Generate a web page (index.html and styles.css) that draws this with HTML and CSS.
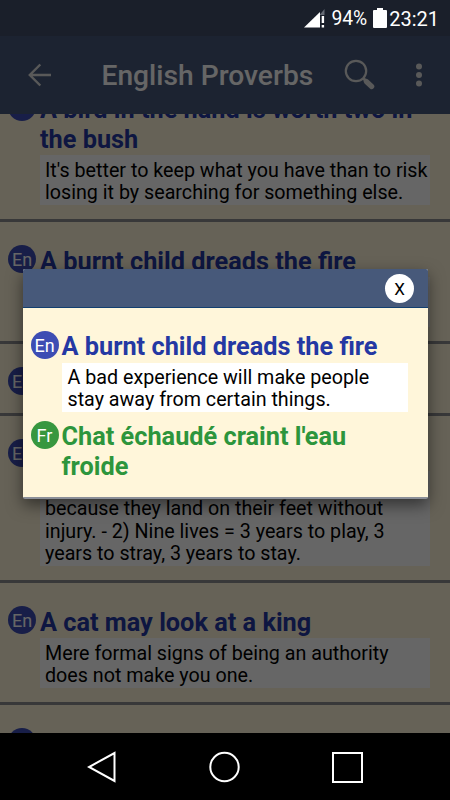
FILE: index.html
```html
<!DOCTYPE html>
<html lang="en">
<head>
    <meta charset="UTF-8">
    <meta name="viewport" content="width=device-width, initial-scale=1.0">
    <title>English Proverbs</title>
    <link rel="stylesheet" href="styles.css">
</head>
<body>
    <div class="status-bar">
        <svg class="signal" width="22" height="20" viewBox="0 0 22 20">
            <path d="M16 6.5L20.5 1V7H16z" fill="#666b75"/>
            <path d="M0 19.5L16 4v15.5z" fill="#fff"/>
            <path d="M17.7 8h2.4v7h-2.4zM17.7 17h2.4v2.5h-2.4z" fill="#fff"/>
        </svg>
        <span class="percent">94%</span>
        <svg class="battery" width="14" height="20" viewBox="0 0 14 20">
            <path d="M4 0h6v2h3q1 0 1 1v16q0 1-1 1H1q-1 0-1-1V3q0-1 1-1h3z" fill="#fff"/>
        </svg>
        <span class="clock">23:21</span>
    </div>

    <div class="screen">
        <header class="app-bar">
            <svg class="back" width="24" height="24" viewBox="0 0 24 24" fill="none" stroke="#dedede" stroke-width="2.4">
                <path d="M12.3 1.5L1.8 12l10.5 10.5M2 12h21"/>
            </svg>
            <h1>English Proverbs</h1>
            <svg class="search" width="32" height="32" viewBox="0 0 32 32" fill="none" stroke="#dedede">
                <circle cx="12" cy="12" r="10.2" stroke-width="2.2"/>
                <path d="M19 19l3 3" stroke-width="3"/>
                <path d="M22.3 22.5l5.4 5" stroke-width="5.2" stroke-linecap="round"/>
            </svg>
            <svg class="more" width="8" height="24" viewBox="0 0 8 24" fill="#dedede">
                <circle cx="4" cy="3.5" r="3"/>
                <circle cx="4" cy="12" r="3"/>
                <circle cx="4" cy="20.5" r="3"/>
            </svg>
        </header>

        <main class="list-wrap">
            <ul class="list">
                <li class="item">
                    <span class="badge">En</span>
                    <div class="text">
                        <h2>A bird in the hand is worth two in the bush</h2>
                        <p>It's better to keep what you have than to risk losing it by searching for something else.</p>
                    </div>
                </li>
                <li class="item">
                    <span class="badge">En</span>
                    <div class="text">
                        <h2>A burnt child dreads the fire</h2>
                        <p>A bad experience will make people stay away from certain things.</p>
                    </div>
                </li>
                <li class="item">
                    <span class="badge">En</span>
                    <div class="text">
                        <h2></h2>
                    </div>
                </li>
                <li class="item">
                    <span class="badge">En</span>
                    <div class="text">
                        <h2></h2>
                        <p><br>because they land on their feet without injury. - 2) Nine lives = 3 years to play, 3 years to stray, 3 years to stay.</p>
                    </div>
                </li>
                <li class="item">
                    <span class="badge">En</span>
                    <div class="text">
                        <h2>A cat may look at a king</h2>
                        <p>Mere formal signs of being an authority does not make you one.</p>
                    </div>
                </li>
                <li class="item">
                    <span class="badge"></span>
                    <div class="text">
                        <h2></h2>
                    </div>
                </li>
            </ul>
        </main>

        <div class="overlay">
            <div class="dialog">
                <div class="dialog-head">
                    <button class="close">X</button>
                </div>
                <div class="dialog-body">
                    <div class="entry">
                        <span class="badge">En</span>
                        <div class="text">
                            <h2>A burnt child dreads the fire</h2>
                            <p>A bad experience will make people stay away from certain things.</p>
                        </div>
                    </div>
                    <div class="entry fr">
                        <span class="badge">Fr</span>
                        <div class="text">
                            <h2>Chat échaudé craint l'eau froide</h2>
                        </div>
                    </div>
                </div>
            </div>
        </div>
    </div>

    <nav class="nav-bar">
        <svg width="30" height="32" viewBox="0 0 30 32" fill="none" stroke="#fff" stroke-width="2">
            <path d="M27.5 2v28L2 16z"/>
        </svg>
        <svg width="32" height="32" viewBox="0 0 32 32" fill="none" stroke="#fff" stroke-width="2">
            <circle cx="16.5" cy="16" r="14.2"/>
        </svg>
        <svg width="32" height="32" viewBox="0 0 32 32" fill="none" stroke="#fff" stroke-width="2">
            <rect x="2" y="2" width="29" height="29"/>
        </svg>
    </nav>
</body>
</html>
```

FILE: styles.css
```css
* {
    box-sizing: border-box;
}
body {
    margin: 0;
    width: 450px;
    height: 800px;
    display: flex;
    flex-direction: column;
    overflow: hidden;
    background: #000;
    font-family: Roboto, sans-serif;
}
h1, h2, p, ul {
    margin: 0;
    padding: 0;
}

/* status bar */
.status-bar {
    height: 36px;
    flex: none;
    display: flex;
    align-items: center;
    justify-content: flex-end;
    padding-right: 11px;
    background: #1a1f2a;
    color: #fff;
    font-size: 20px;
}
.percent {
    margin: 1px 6px 0 5px;
    font-size: 19.3px;
}
.clock {
    margin: 1px 0 0 2px;
}

.screen {
    position: relative;
    height: 697px;
    flex: none;
    display: flex;
    flex-direction: column;
    overflow: hidden;
}
.app-bar {
    height: 78px;
    flex: none;
    display: flex;
    align-items: center;
    padding: 0 27px 0 28px;
    background: #47597a;
    color: #fff;
}
.app-bar h1 {
    flex: 1;
    margin-left: 49.5px;
    font-size: 28.2px;
    font-weight: 500;
    white-space: nowrap;
}
.search {
    margin-right: 39px;
}

/* proverb list */
.list-wrap {
    flex: 1;
    overflow: hidden;
    background: #fff6da;
}
.list {
    margin-top: -44px;
    list-style: none;
}
.item {
    display: flex;
    padding: 23px 20px 14px 8px;
    border-bottom: 3px solid #8c8c90;
}
.badge {
    width: 28px;
    height: 28px;
    flex: none;
    border-radius: 50%;
    background: #3d4db3;
    color: #fff;
    font-size: 18px;
    line-height: 29px;
    text-align: center;
}
.text {
    flex: 1;
    margin-left: 4px;
}
.text h2 {
    min-height: 32px;
    padding-top: 2px;
    color: #2438a3;
    font-size: 25.3px;
    font-weight: 700;
    line-height: 30px;
}
.text p {
    padding: 5px 0 1px 5px;
    background: #fff;
    color: #000;
    font-size: 19.7px;
    line-height: 22.1px;
}

/* dialog */
.overlay {
    position: absolute;
    inset: 0;
    display: flex;
    justify-content: center;
    align-items: flex-start;
    padding-top: 233px;
    background: rgba(0, 0, 0, 0.6);
}
.dialog {
    width: 405px;
    height: 230px;
    border-radius: 2px;
    border-bottom: 2px solid #8b8f98;
    overflow: hidden;
    background: #fff6da;
    box-shadow: 0 6px 16px rgba(0, 0, 0, 0.5);
}
.dialog-head {
    height: 39px;
    display: flex;
    align-items: center;
    justify-content: flex-end;
    padding-right: 14px;
    background: #47597a;
    border-bottom: 1px solid #123f70;
}
.close {
    width: 29px;
    height: 29px;
    padding: 2px 0 0 1px;
    border: none;
    border-radius: 50%;
    background: #fff;
    color: #000;
    font-family: inherit;
    font-size: 17px;
}
.dialog-body {
    padding: 23px 20px 0 8px;
}
.entry {
    display: flex;
}
.entry .text {
    margin-left: 3px;
}
.entry .text h2 {
    padding-top: 1px;
}
.entry .text p {
    padding: 4px 4px 1px 6px;
}
.fr {
    margin-top: 9px;
}
.fr .badge {
    background: #37973f;
}
.fr .text h2 {
    color: #2d953c;
}

/* system buttons */
.nav-bar {
    flex: 1;
    display: flex;
    align-items: center;
    justify-content: space-between;
    padding: 0 87px;
}
```
